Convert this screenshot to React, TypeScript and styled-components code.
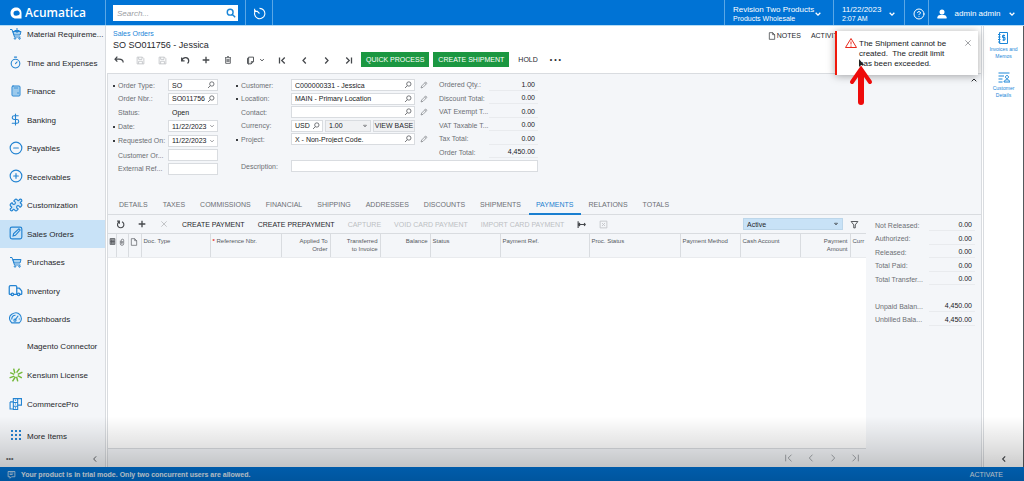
import React, { useId } from "react";
import styled, { createGlobalStyle, css } from "styled-components";
import {
  Calculator,
  CircleHelp,
  CircleMinus,
  CirclePlus,
  DollarSign,
  Puzzle,
  Timer,
  Truck,
} from "lucide-react";

const c = {
  blue: "#0073d5",
  link: "#1a86d8",
  panel: "#f4f6f9",
  line: "#d9dce0",
  label: "#6c6f74",
  text: "#26282c",
  green: "#1b9741",
  selected: "#c8e2f7",
};

const GlobalStyle = createGlobalStyle`
  *, *::before, *::after { box-sizing: border-box; }
  body { margin: 0; font-family: "Liberation Sans", Arial, sans-serif; font-size: 7px; color: ${c.text}; background: #fff; }
  button, input, select { font: inherit; color: inherit; margin: 0; border-radius: 0; }
  button { border: 0; padding: 0; background: none; white-space: nowrap; }
  a { color: inherit; text-decoration: none; }
  ul { list-style: none; margin: 0; padding: 0; }
  svg { display: block; flex: none; }
`;

const Page = styled.div`
  position: relative;
  min-height: 100vh;
  display: flex;
  flex-direction: column;
  overflow: hidden;
`;

/* ---------- icons ---------- */

const Svg = styled.svg.attrs({ viewBox: "0 0 24 24", "aria-hidden": true })<{ $size?: number; $w?: number }>`
  width: ${(p) => p.$size ?? 10}px;
  height: ${(p) => p.$size ?? 10}px;
  fill: none;
  stroke: currentColor;
  stroke-width: ${(p) => p.$w ?? 2.4};
`;

type IconProps = { d: string; size?: number; w?: number };
const Icon = ({ d, size, w }: IconProps) => (
  <Svg $size={size} $w={w}>
    <path d={d} />
  </Svg>
);

const paths = {
  search: "M15 15L22 22M17 10A7 7 0 1 1 3 10A7 7 0 1 1 17 10",
  lens: "M10 14L3 21M21 9A6.5 6.5 0 1 1 8 9A6.5 6.5 0 1 1 21 9",
  history: "M5 6A9.5 9.5 0 1 0 12 2.500M12 12L7 7M3 3V8H8",
  down: "M5 8.500L12 15.500L19 8.500",
  up: "M5 16L12 9L19 16",
  left: "M15.500 4L8 12L15.500 20",
  right: "M8.500 4L16 12L8.500 20",
  first: "M4 4V20M18 4L10 12L18 20",
  last: "M20 4V20M6 4L14 12L6 20",
  back: "M22 18C22 12 18 10 12 10H3M8 4L2.500 10L8 16",
  save: "M3 3H17L21 7V21H3ZM7 3V9H16V3M7 21V14H17V21",
  undo: "M4 6V14H11M4 14C7 5 20 3 21 14C21 17 20 19 18 20",
  plus: "M12 2V22M2 12H22",
  trash: "M3 5H21M5 5V22H19V5M9 9V18M12 9V18M15 9V18M9 2H15",
  copy: "M7 6H4V20L8 22M7 3H20V15L14 21H7ZM14 21V15H20",
  pencil: "M3 21L5 15L17 3L21 7L9 19ZM14 6L18 10",
  page: "M4 2H14L20 8V22H4ZM14 2V8H20",
  refresh: "M9 4.500A8.500 8.500 0 1 0 16 4.500M9 10V3H3",
  close: "M4 4L20 20M20 4L4 20",
  fit: "M3 3V21M3 12H21M8 8L4 12L8 16M19 8L22 12L19 16",
  excel: "M3 3H21V21H3ZM8 8L16 16M16 8L8 16",
  filter: "M3 4H21L14 13V21H10V13Z",
  clip: "M7 8V17A5 5 0 0 0 17 17V7A3.500 3.500 0 0 0 10 7V16H13V9",
  rows: "M4 2H20V22H4ZM4 7H20M4 12H20M4 17H20M9 5V20M14 5V20",
  warning: "M12 3L23 21H1ZM12 9V15M12 17V19.500",
  invoice: "M5 1H21V23H5ZM2 5H7M2 10H7M2 15H7M2 20H7M16 7H11V11H16V16H11M13.500 5V18",
  customer: "M1 4H23M1 10H12M1 16H9M1 22H9M18 9A3 3 0 1 1 17.900 9M12 22C12 16 24 16 24 22Z",
  edit: "M2 5A3 3 0 0 1 5 2H19A3 3 0 0 1 22 5V19A3 3 0 0 1 19 22H5A3 3 0 0 1 2 19ZM7 17L8 13L17 5L19 7L11 16Z",
  modules: "M8 3H16V10H8ZM8 10H16V17H8ZM8 17H16V23H8ZM2 9H8M2 9V22H8M16 3H23V15H16M11 6H13M11 13H13M11 20H13",
  bubble: "M3 4H21V18H12L8 22V18H3ZM7 8H17M7 12H15",
};

const LogoMark = () => (
  <svg width="12" height="12" viewBox="0 0 24 24" aria-hidden="true">
    <path
      fill="#fff"
      fillRule="evenodd"
      d="M12 1C5 1 1 6 1 12S5 23 12 23H23V12C23 5 18 1 12 1ZM12 7.500A5 5 0 0 1 16.500 16.500L12 17.500A5 5 0 0 1 12 7.500Z"
    />
  </svg>
);

const Cart = ({ plus }: { plus?: boolean }) => (
  <svg width="12" height="12" viewBox="0 0 24 24" fill="none" stroke="#2484d2" strokeWidth="2" aria-hidden="true">
    <path d="M0 3H4L9 18H21" />
    <path d="M6 7H22L20 14H8Z" fill="#a9d2f0" />
    {plus && <path d="M14 0V10M9 5H19" />}
    <circle cx="10" cy="21" r="1.500" />
    <circle cx="19" cy="21" r="1.500" />
  </svg>
);

const Dial = () => (
  <svg width="13" height="13" viewBox="0 0 24 24" fill="none" stroke="#2484d2" strokeWidth="2" aria-hidden="true">
    <path d="M5 20C-1 14 0 7 5 4S16 0 20 5S24 16 19 20Z" fill="#e2f0fb" />
    <path d="M5 14C5 8 8 6 12 6M19 14V12M11 15L17 7" />
    <circle cx="11" cy="15" r="2" />
  </svg>
);

const Kensium = () => (
  <svg width="14" height="14" viewBox="0 0 24 24" fill="none" stroke="#74b93a" strokeWidth="2.500" aria-hidden="true">
    <path d="M8 1L10 9M18 1L13 8M23 7L15 11M22 17L15 13M15 23L13 15M6 23L11 15M1 17L9 14M2 8L9 11" />
  </svg>
);

const DotGrid = () => (
  <svg width="10" height="10" viewBox="0 0 10 10" fill="#2484d2" aria-hidden="true">
    {[0, 4, 8].map((y) => [0, 4, 8].map((x) => <rect key={`${x}${y}`} x={x} y={y} width="2" height="2" />))}
  </svg>
);

const Person = () => (
  <svg width="10" height="10" viewBox="0 0 24 24" fill="#fff" aria-hidden="true">
    <circle cx="12" cy="7" r="6" />
    <path d="M1 23V20C1 16 6 14 12 14S23 16 23 20V23Z" />
  </svg>
);

/* ---------- header ---------- */

const Header = styled.header`
  height: 26px;
  display: flex;
  color: #fff;
  background: ${c.blue};
  border-bottom: 1px solid #b5dcf5;
  position: relative;
  z-index: 1;
`;

const Brand = styled.a`
  width: 106px;
  padding-left: 10px;
  display: flex;
  align-items: center;
  gap: 3px;
  border-right: 1px solid #5aa7e6;
  font: 600 12px/24px "Open Sans", "Noto Sans", sans-serif;
`;

const SearchBox = styled.label`
  width: 125px;
  height: 16px;
  margin: 5px 7px;
  padding: 0 2px;
  display: flex;
  align-items: center;
  background: #fff;
  color: ${c.link};
  input {
    flex: 1;
    min-width: 0;
    border: 0;
    outline: 0;
    background: none;
    font-size: 8px;
    font-style: italic;
  }
  input::placeholder { color: #9a9da1; }
`;

const HeadButton = styled.button<{ $width: number; $right?: number }>`
  width: ${(p) => p.$width}px;
  padding: 2px ${(p) => p.$right ?? 8}px 0 8px;
  display: flex;
  align-items: center;
  justify-content: space-between;
  border-left: 1px solid #5aa7e6;
  font-size: 8px;
  line-height: 9px;
  text-align: left;
  small { display: block; font-size: 7px; }
`;

const Clock = styled(HeadButton)`
  justify-content: center;
  border-right: 1px solid #5aa7e6;
`;

const Spacer = styled.div`
  flex: 1;
`;

/* ---------- sidebar ---------- */

const Body = styled.div`
  flex: 1;
  display: flex;
`;

const Sidebar = styled.nav`
  width: 106px;
  display: flex;
  flex-direction: column;
  background: ${c.panel};
  border-right: 1px solid ${c.line};
`;

const Modules = styled.ul`
  margin-top: -6px;
  flex: 1;
`;

const Module = styled.li<{ $active?: boolean; $height?: number; $top?: number }>`
  height: 28px;
  &:nth-child(odd) { height: 29px; }
  ${(p) => p.$height && css`&&& { height: ${p.$height}px; }`}
  margin-top: ${(p) => p.$top ?? 0}px;
  background: ${(p) => (p.$active ? c.selected : "none")};
  a {
    height: 100%;
    padding-left: 8px;
    display: flex;
    align-items: center;
    gap: 4px;
    font-size: 8px;
    white-space: nowrap;
  }
`;

const ModuleIcon = styled.span`
  width: 15px;
  padding-bottom: 2px;
  display: flex;
  justify-content: center;
  color: #2484d2;
`;

const SideFoot = styled.div`
  height: 17px;
  padding: 0 6px;
  display: flex;
  align-items: center;
  justify-content: space-between;
  color: #65686c;
  font-weight: bold;
`;

/* ---------- main column ---------- */

const Main = styled.main`
  flex: 1;
  min-width: 0;
  margin-left: 1px;
  display: flex;
  flex-direction: column;
`;

const Heading = styled.div`
  display: flex;
  justify-content: space-between;
  padding: 3px 0 0 6px;
  height: 25px;
`;

const Crumb = styled.a`
  display: block;
  color: ${c.link};
  line-height: 10px;
`;

const Title = styled.h1`
  margin: 0;
  font-size: 9px;
  line-height: 12px;
  font-weight: normal;
`;

const PageLinks = styled.div`
  display: flex;
  align-items: center;
  gap: 10px;
  height: 13px;
  padding-right: 132px;
  button { display: flex; align-items: center; gap: 1px; }
`;

const Toolbar = styled.div`
  height: 22px;
  padding-left: 7px;
  display: flex;
  align-items: flex-start;
`;

const Tool = styled.button<{ $off?: boolean; $width?: number }>`
  width: ${(p) => p.$width ?? 22}px;
  height: 18px;
  display: flex;
  align-items: center;
  color: ${(p) => (p.$off ? "#c3c5c8" : "#45484c")};
  svg + svg { margin-left: 4px; }
`;

const Primary = styled.button`
  height: 15px;
  margin: 1px 4px 0 0;
  padding: 0 5px;
  background: ${c.green};
  color: #fff;
`;

const TextTool = styled.button`
  height: 17px;
  margin: 0 7px 0 5px;
`;

const Form = styled.form`
  position: relative;
  height: 122px;
  padding: 4px 0 0 5px;
  display: flex;
  gap: 18px;
  background: ${c.panel};
  border-top: 1px solid ${c.line};
  border-left: 1px solid ${c.line};
`;

const FieldsA = styled.div`
  display: grid;
  grid-template-rows: 14px 13px 14px 14px 15px 14px 13px;
  align-content: start;
`;

const FieldsB = styled.div`
  display: grid;
  grid-template-rows: 14px 13px 14px 13px 14px 14px;
  align-content: start;
`;

const Row = styled.div`
  display: grid;
  grid-template-columns: 55px auto;
  align-items: center;
`;

const Label = styled.label<{ $required?: boolean }>`
  padding-left: 5px;
  color: ${c.label};
  white-space: nowrap;
  position: relative;
  ${(p) =>
    p.$required &&
    css`
      &::before {
        content: "";
        position: absolute;
        left: 0;
        top: 3px;
        width: 2px;
        height: 2px;
        background: #3a3d41;
      }
    `}
`;

const Box = styled.span<{ $width: number; $gray?: boolean }>`
  width: ${(p) => p.$width}px;
  height: 12px;
  padding: 0 2px 0 3px;
  display: flex;
  align-items: center;
  color: #55585d;
  background: ${(p) => (p.$gray ? "#f0f1f3" : "#fff")};
  border: 1px solid ${c.line};
  input {
    flex: 1;
    width: 0;
    min-width: 0;
    padding: 0;
    border: 0;
    outline: 0;
    background: none;
    color: #17191c;
  }
`;

const Inline = styled.div`
  display: flex;
  align-items: center;
  gap: 2px;
`;

const EditLink = styled.button`
  margin-left: 3px;
  color: #75787d;
`;

const ViewBase = styled.button`
  width: 42px;
  height: 12px;
  overflow: hidden;
  border: 1px solid ${c.line};
  background: #f0f1f3;
`;

const Plain = styled.output`
  padding-left: 4px;
  color: #17191c;
`;

const Totals = styled.dl`
  margin: 0;
  display: grid;
  grid-template-columns: 50px 49px;
  grid-template-rows: 14px 13px 14px 13px 14px 13px;
  align-items: center;
  align-content: start;
  line-height: 10px;
  white-space: nowrap;
  dt { color: ${c.label}; }
  dd {
    margin: 0;
    padding-right: 3px;
    text-align: right;
    color: #17191c;
    border-bottom: 1px solid #e9ebee;
  }
`;

const RightFields = styled.div`
  display: flex;
  flex-direction: column;
`;

const Split = styled.div`
  display: flex;
  gap: 11px;
`;

const Collapse = styled.button`
  margin: -2px 3px 0 auto;
  align-self: flex-start;
`;

const Tabs = styled.div`
  height: 20px;
  padding-left: 4px;
  display: flex;
  background: ${c.panel};
  border-left: 1px solid ${c.line};
  border-bottom: 1px solid ${c.line};
`;

const Tab = styled.button<{ $on?: boolean }>`
  padding: 0 8px 0 7px;
  height: 20px;
  color: ${(p) => (p.$on ? "#1a7fd0" : c.label)};
  border-bottom: 2px solid ${(p) => (p.$on ? "#1a7fd0" : "transparent")};
`;

const Detail = styled.div`
  flex: 1;
  display: flex;
  background: ${c.panel};
`;

const GridPane = styled.section`
  flex: 1;
  min-width: 0;
  display: flex;
  flex-direction: column;
  border-left: 1px solid ${c.line};
`;

const GridTools = styled.div`
  height: 18px;
  padding-left: 8px;
  display: flex;
  align-items: center;
`;

const Action = styled.button<{ $off?: boolean }>`
  margin-right: 13px;
  color: ${(p) => (p.$off ? "#bcbfc3" : c.text)};
`;

const StatusPick = styled.span`
  position: relative;
  width: 100px;
  margin: 0 7px 0 auto;
  display: flex;
  align-items: center;
  background: ${c.selected};
  border: 1px solid #bcd6ea;
  select {
    appearance: none;
    width: 100%;
    height: 10px;
    padding: 0 3px;
    border: 0;
    outline: 0;
    background: none;
  }
  svg { position: absolute; right: 3px; pointer-events: none; }
`;

const FilterButton = styled.button`
  margin-right: 7px;
  color: #45484c;
`;

const Table = styled.table`
  width: 100%;
  table-layout: fixed;
  border-collapse: collapse;
  border-top: 1px solid ${c.line};
  th {
    height: 24px;
    padding: 3px 2px 0;
    overflow: hidden;
    vertical-align: top;
    font-size: 6px;
    line-height: 8px;
    font-weight: normal;
    text-align: left;
    color: #55585d;
    border-right: 1px solid ${c.line};
    border-bottom: 1px solid #e9ebee;
    white-space: nowrap;
  }
  th:last-child { border-right: 0; }
`;

const Th = styled.th<{ $right?: boolean; $icon?: boolean }>`
  && {
    text-align: ${(p) => (p.$right ? "right" : "left")};
    ${(p) => p.$icon && "padding: 4px 0 0 1px;"}
  }
  i { color: #e8291c; font-style: normal; font-weight: bold; }
`;

const Rows = styled.div`
  flex: 1;
  background: #fff;
  border-bottom: 1px solid ${c.line};
`;

const Pager = styled.div`
  height: 18px;
  padding-right: 6px;
  display: flex;
  align-items: center;
  justify-content: flex-end;
  gap: 12px;
  color: #a3a7ab;
`;

const Summary = styled(Totals)`
  width: 115px;
  padding: 4px 6px 0 9px;
  grid-template-columns: 54px 1fr;
  grid-template-rows: 13px 14px 13px 14px 13px 14px 13px 14px;
`;

/* ---------- right rail, toast, status ---------- */

const Rail = styled.aside`
  width: 43px;
  padding: 6px 0 4px 0;
  display: flex;
  flex-direction: column;
  align-items: center;
  color: ${c.link};
  background: #fff;
  border-left: 3px double ${c.line};
  border-right: 1px solid #55585c;
`;

const RailLink = styled.a`
  height: 39px;
  display: flex;
  flex-direction: column;
  align-items: center;
  gap: 2px;
  font-size: 5px;
  line-height: 7px;
  text-align: center;
`;

const RailToggle = styled.button`
  margin-top: auto;
  color: #45484c;
`;

const Toast = styled.div`
  position: absolute;
  z-index: 2;
  top: 31px;
  right: 46px;
  width: 143px;
  height: 44px;
  padding: 8px 6px 0 8px;
  display: flex;
  align-items: flex-start;
  gap: 2px;
  background: #fff;
  border-left: 2px solid #f0190c;
  box-shadow: 0 1px 8px rgba(0, 0, 0, 0.35);
  color: #e8291c;
  > svg:first-child { margin-top: -2px; }
  p {
    flex: 1;
    margin: 0;
    font-size: 8px;
    line-height: 10px;
    color: #17191c;
    white-space: pre-line;
  }
  button { color: #8a8d91; }
`;

const Pointer = styled.svg`
  position: absolute;
  left: 10px;
  top: 27px;
`;

const StatusBar = styled.footer`
  height: 14px;
  padding: 0 21px 0 7px;
  display: flex;
  align-items: center;
  gap: 5px;
  color: #e4f1fb;
  background: ${c.blue};
  font-size: 7px;
  span { flex: 1; font-weight: bold; }
`;

const Shade = styled.div`
  position: absolute;
  z-index: 3;
  left: 0;
  right: 0;
  bottom: 0;
  height: 65px;
  pointer-events: none;
  background: linear-gradient(rgba(0, 0, 0, 0), rgba(0, 0, 0, 0.12) 50%, rgba(0, 0, 0, 0.26));
`;

/* ---------- pieces ---------- */

type FieldProps = {
  label: string;
  value?: string;
  required?: boolean;
  width?: number;
  icon?: "lens" | "down";
  edit?: boolean;
};

const Field = ({ label, value = "", required, width = 50, icon, edit }: FieldProps) => {
  const id = useId();
  return (
    <Row>
      <Label htmlFor={id} $required={required}>{label}</Label>
      <Inline>
        <Box $width={width}>
          <input id={id} defaultValue={value} />
          {icon && <Icon d={paths[icon]} size={icon === "lens" ? 8 : 6} w={2.4} />}
        </Box>
        {edit && (
          <EditLink type="button" aria-label={`Edit ${label}`}>
            <Icon d={paths.pencil} size={8} w={2} />
          </EditLink>
        )}
      </Inline>
    </Row>
  );
};

const modules: { name: string; icon: React.ReactNode; active?: boolean; height?: number; top?: number }[] = [
  { name: "Material Requireme...", icon: <Cart plus /> },
  { name: "Time and Expenses", icon: <Timer size={13} /> },
  { name: "Finance", icon: <Calculator size={12} fill="#b9dbf3" /> },
  { name: "Banking", icon: <DollarSign size={13} /> },
  { name: "Payables", icon: <CircleMinus size={14} /> },
  { name: "Receivables", icon: <CirclePlus size={14} /> },
  { name: "Customization", icon: <Puzzle size={14} fill="#d3e8f8" /> },
  { name: "Sales Orders", icon: <Icon d={paths.edit} size={14} w={2} />, active: true },
  { name: "Purchases", icon: <Cart /> },
  { name: "Inventory", icon: <Truck size={15} /> },
  { name: "Dashboards", icon: <Dial /> },
  { name: "Magento Connector", icon: null, height: 24 },
  { name: "Kensium License", icon: <Kensium />, height: 29, top: 3 },
  { name: "CommercePro", icon: <Icon d={paths.modules} size={13} w={2} />, height: 28 },
  { name: "More Items", icon: <DotGrid />, height: 28, top: 4 },
];

const tabs = ["DETAILS", "TAXES", "COMMISSIONS", "FINANCIAL", "SHIPPING", "ADDRESSES", "DISCOUNTS", "SHIPMENTS", "PAYMENTS", "RELATIONS", "TOTALS"];

const orderTotals = [
  ["Ordered Qty.:", "1.00"],
  ["Discount Total:", "0.00"],
  ["VAT Exempt T...", "0.00"],
  ["VAT Taxable T...", "0.00"],
  ["Tax Total:", "0.00"],
  ["Order Total:", "4,450.00"],
];

const paymentTotals = [
  ["Not Released:", "0.00"],
  ["Authorized:", "0.00"],
  ["Released:", "0.00"],
  ["Total Paid:", "0.00"],
  ["Total Transfer...", "0.00"],
];

const balances = [
  ["Unpaid Balan...", "4,450.00"],
  ["Unbilled Bala...", "4,450.00"],
];

const columnWidths = [8, 12, 13, 69, 71, 49, 50, 50, 70, 89, 91, 60, 60, 50];

const Pair = ({ row }: { row: string[] }) => (
  <>
    <dt>{row[0]}</dt>
    <dd>{row[1]}</dd>
  </>
);

const pagerIcons: (keyof typeof paths)[] = ["first", "left", "right", "last"];

export default function App() {
  return (
    <Page>
      <GlobalStyle />
      <Header>
        <Brand href="#">
          <LogoMark />
          Acumatica
        </Brand>
        <SearchBox>
          <input type="text" placeholder="Search..." aria-label="Search" />
          <Icon d={paths.search} size={10} w={3.4} />
        </SearchBox>
        <Clock $width={28} aria-label="Recent">
          <Icon d={paths.history} size={13} w={2} />
        </Clock>
        <Spacer />
        <HeadButton $width={109} $right={11}>
          <span>Revision Two Products<small>Products Wholesale</small></span>
          <Icon d={paths.down} size={8} w={4} />
        </HeadButton>
        <HeadButton $width={71}>
          <span>11/22/2023<small>2:07 AM</small></span>
          <Icon d={paths.down} size={8} w={4} />
        </HeadButton>
        <HeadButton $width={24} $right={3} aria-label="Help">
          <CircleHelp size={12} />
        </HeadButton>
        <HeadButton $width={96}>
          <Person />
          admin admin
          <Icon d={paths.down} size={8} w={4} />
        </HeadButton>
      </Header>

      <Body>
        <Sidebar>
          <Modules>
            {modules.map((m) => (
              <Module key={m.name} $active={m.active} $height={m.height} $top={m.top}>
                <a href="#">
                  <ModuleIcon>{m.icon}</ModuleIcon>
                  {m.name}
                </a>
              </Module>
            ))}
          </Modules>
          <SideFoot>
            <button aria-label="More">•••</button>
            <button aria-label="Collapse menu"><Icon d={paths.left} size={8} w={3} /></button>
          </SideFoot>
        </Sidebar>

        <Main>
          <Heading>
            <div>
              <Crumb href="#">Sales Orders</Crumb>
              <Title>SO SO011756 - Jessica</Title>
            </div>
            <PageLinks>
              <button><Icon d={paths.page} size={8} w={2} />NOTES</button>
              <button>ACTIVITIES</button>
            </PageLinks>
          </Heading>

          <Toolbar>
            <Tool aria-label="Back"><Icon d={paths.back} w={3} /></Tool>
            <Tool $off aria-label="Save and close"><Icon d={paths.save} size={9} /></Tool>
            <Tool $off aria-label="Save"><Icon d={paths.save} size={9} /></Tool>
            <Tool aria-label="Undo"><Icon d={paths.undo} w={3} /></Tool>
            <Tool aria-label="Add"><Icon d={paths.plus} size={8} w={4} /></Tool>
            <Tool aria-label="Delete"><Icon d={paths.trash} size={8} /></Tool>
            <Tool $width={32} aria-label="Clipboard">
              <Icon d={paths.copy} size={9} />
              <Icon d={paths.down} size={6} w={4} />
            </Tool>
            <Tool aria-label="First"><Icon d={paths.first} size={9} w={3.4} /></Tool>
            <Tool aria-label="Previous"><Icon d={paths.left} size={9} w={3.4} /></Tool>
            <Tool aria-label="Next"><Icon d={paths.right} size={9} w={3.4} /></Tool>
            <Tool $width={17} aria-label="Last"><Icon d={paths.last} size={9} w={3.4} /></Tool>
            <Primary>QUICK PROCESS</Primary>
            <Primary>CREATE SHIPMENT</Primary>
            <TextTool>HOLD</TextTool>
            <TextTool aria-label="More actions">• • •</TextTool>
          </Toolbar>

          <Form>
            <FieldsA>
              <Field label="Order Type:" value="SO" required icon="lens" />
              <Field label="Order Nbr.:" value="SO011756" icon="lens" />
              <Row>
                <Label as="span">Status:</Label>
                <Plain>Open</Plain>
              </Row>
              <Field label="Date:" value="11/22/2023" required icon="down" />
              <Field label="Requested On:" value="11/22/2023" required icon="down" />
              <Field label="Customer Or..." />
              <Field label="External Ref..." />
            </FieldsA>
            <RightFields>
              <Split>
                <FieldsB>
                  <Field label="Customer:" value="C000000331 - Jessica" required width={124} icon="lens" edit />
                  <Field label="Location:" value="MAIN - Primary Location" required width={124} icon="lens" edit />
                  <Field label="Contact:" width={124} icon="lens" edit />
                  <Row>
                    <Label htmlFor="currency">Currency:</Label>
                    <Inline>
                      <Box $width={32}>
                        <input id="currency" defaultValue="USD" />
                        <Icon d={paths.lens} size={8} />
                      </Box>
                      <Box $width={46} $gray>
                        <input aria-label="Exchange rate" defaultValue="1.00" />
                        <Icon d="M6 9H18L12 16Z" size={6} />
                      </Box>
                      <ViewBase type="button">VIEW BASE</ViewBase>
                    </Inline>
                  </Row>
                  <Field label="Project:" value="X - Non-Project Code." required width={124} icon="lens" edit />
                </FieldsB>
                <Totals>
                  {orderTotals.map((r) => <Pair key={r[0]} row={r} />)}
                </Totals>
              </Split>
              <Field label="Description:" width={247} />
            </RightFields>
            <Collapse type="button" aria-label="Collapse form">
              <Icon d={paths.up} size={8} w={3} />
            </Collapse>
          </Form>

          <Tabs role="tablist">
            {tabs.map((t) => (
              <Tab key={t} role="tab" aria-selected={t === "PAYMENTS"} $on={t === "PAYMENTS"}>{t}</Tab>
            ))}
          </Tabs>

          <Detail>
            <GridPane>
              <GridTools>
                <Tool aria-label="Refresh"><Icon d={paths.refresh} size={9} w={3} /></Tool>
                <Tool aria-label="Add row"><Icon d={paths.plus} size={8} w={4} /></Tool>
                <Tool $off aria-label="Delete row"><Icon d={paths.close} size={8} w={3} /></Tool>
                <Action>CREATE PAYMENT</Action>
                <Action>CREATE PREPAYMENT</Action>
                <Action $off>CAPTURE</Action>
                <Action $off>VOID CARD PAYMENT</Action>
                <Action $off>IMPORT CARD PAYMENT</Action>
                <Tool aria-label="Fit columns"><Icon d={paths.fit} size={9} w={3} /></Tool>
                <Tool $off aria-label="Export to Excel"><Icon d={paths.excel} size={9} /></Tool>
                <StatusPick>
                  <select aria-label="Payment filter" defaultValue="Active">
                    <option>Active</option>
                  </select>
                  <Icon d="M6 9H18L12 16Z" size={6} />
                </StatusPick>
                <FilterButton aria-label="Filter"><Icon d={paths.filter} size={9} w={2.4} /></FilterButton>
              </GridTools>
              <Table>
                <colgroup>
                  {columnWidths.map((w, i) => <col key={i} width={w} />)}
                  <col />
                </colgroup>
                <thead>
                  <tr>
                    <Th $icon aria-label="Rows"><Icon d={paths.rows} size={7} w={3} /></Th>
                    <Th $icon aria-label="Files"><Icon d={paths.clip} size={8} w={2} /></Th>
                    <Th $icon aria-label="Notes"><Icon d={paths.page} size={8} w={2} /></Th>
                    <Th>Doc. Type</Th>
                    <Th><i>* </i>Reference Nbr.</Th>
                    <Th $right>Applied To<br />Order</Th>
                    <Th $right>Transferred<br />to Invoice</Th>
                    <Th $right>Balance</Th>
                    <Th>Status</Th>
                    <Th>Payment Ref.</Th>
                    <Th>Proc. Status</Th>
                    <Th>Payment Method</Th>
                    <Th>Cash Account</Th>
                    <Th $right>Payment<br />Amount</Th>
                    <Th>Curr</Th>
                  </tr>
                </thead>
              </Table>
              <Rows />
              <Pager>
                {pagerIcons.map((k) => (
                  <button key={k} aria-label={k}><Icon d={paths[k]} w={2.4} /></button>
                ))}
              </Pager>
            </GridPane>
            <Summary>
              {paymentTotals.map((r) => <Pair key={r[0]} row={r} />)}
              <span /><span />
              {balances.map((r) => <Pair key={r[0]} row={r} />)}
            </Summary>
          </Detail>
        </Main>

        <Rail>
          <RailLink href="#">
            <Icon d={paths.invoice} size={12} w={2} />
            <span>Invoices and<br />Memos</span>
          </RailLink>
          <RailLink href="#">
            <Icon d={paths.customer} size={12} w={2} />
            <span>Customer<br />Details</span>
          </RailLink>
          <RailToggle aria-label="Collapse panel"><Icon d={paths.left} size={8} w={3.4} /></RailToggle>
        </Rail>
      </Body>

      <StatusBar>
        <Icon d={paths.bubble} size={9} w={2} />
        <span>Your product is in trial mode. Only two concurrent users are allowed.</span>
        <a href="#">ACTIVATE</a>
      </StatusBar>

      <Toast role="alert">
        <Icon d={paths.warning} size={12} w={2} />
        <p>{"The Shipment cannot be\ncreated.\u00a0 The credit limit\nhas been exceeded."}</p>
        <button aria-label="Dismiss"><Icon d={paths.close} size={8} w={2.4} /></button>
        <Pointer width="28" height="50" viewBox="0 0 28 50" aria-hidden="true">
          <path d="M12 1V9L14 7L17 7Z" fill="#222" />
          <path d="M14 44V16" stroke="#ee0b0b" strokeWidth="6" strokeLinecap="round" />
          <path d="M5 24L14 11L23 24" fill="none" stroke="#ee0b0b" strokeWidth="4" strokeLinecap="round" />
        </Pointer>
      </Toast>
      <Shade />
    </Page>
  );
}
